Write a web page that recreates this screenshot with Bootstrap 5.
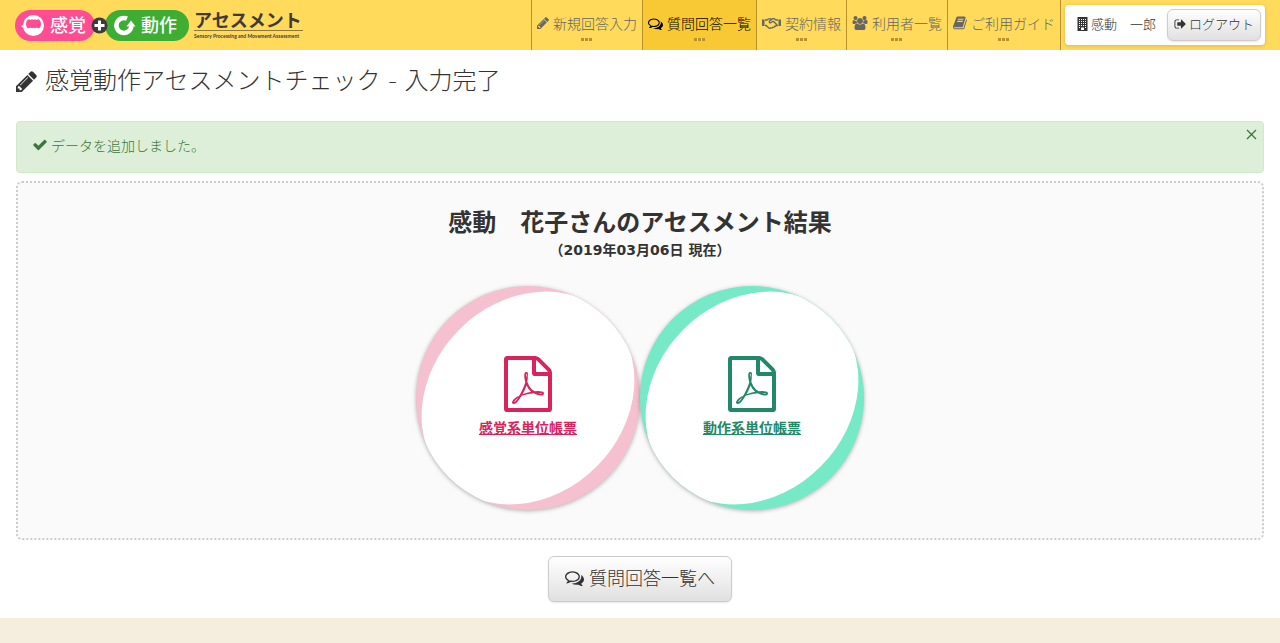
<!DOCTYPE html>
<html lang="ja">
<head>
<meta charset="utf-8">
<meta name="viewport" content="width=device-width, initial-scale=1">
<title>感覚動作アセスメントチェック - 入力完了</title>
<link rel="stylesheet" href="https://cdn.jsdelivr.net/npm/bootstrap@5.3.0/dist/css/bootstrap.min.css">
<style>
body{background:#f5eddd;color:#333;font-family:"Noto Sans CJK JP","Liberation Sans",sans-serif;font-size:14px;line-height:20px;font-weight:300}
.ico{fill:currentColor;flex:none;height:14px}
.topbar{background:#ffda5b;min-height:50px;padding:0 15px}
.topbar .nav-link{color:#666;border-left:1px solid #b8912b;height:50px;padding:13px 5px 0;display:flex;flex-direction:column;align-items:center;gap:5px}
.topbar .nav-link.active{background:#f9c935;color:#000}
.topbar .nav-link::after{content:"";width:11px;height:3px;background:repeating-linear-gradient(90deg,#b8912b 0 3px,#ffda5b 3px 4px)}
.topbar .nav-item:last-child{border-right:1px solid #b8912b}
.lbl{display:flex;align-items:center;gap:4px;white-space:nowrap}
.userbox{background:#fff;border-radius:4px;margin:5px 0 5px 4px;height:40px;padding:4px 4px 4px 12px;font-size:13px;gap:11px;box-shadow:0 1px 4px rgba(0,0,0,.15)}
.userbox .lbl{gap:3px;padding-bottom:2px}
.btn-grad{--bs-btn-color:#333;--bs-btn-border-color:#ccc;--bs-btn-font-weight:300;background:linear-gradient(#fff,#e0e0e0);box-shadow:0 1px 2px rgba(0,0,0,.1);display:inline-flex;align-items:center}
.btn-out{font-size:13px;line-height:20px;padding:4px 6px 6px;height:32px;gap:3px}
.btn-big{font-size:18px;line-height:24px;padding:8px 16px 12px;gap:5px;border-radius:6px;height:46px}
.page{background:#fff;padding:15px 16px 16px}
.page h1{font-family:"DejaVu Sans","Noto Sans CJK JP",sans-serif;font-size:24px;line-height:32px;font-weight:300;gap:8px;margin:0 0 24px}
.done{--bs-alert-bg:#ddefd8;--bs-alert-color:#3c763d;--bs-alert-border-color:#d0e9c6;padding:13px 16px 17px;margin:0 0 8px;border-radius:4px}
.shut{position:absolute;right:6px;top:7px;border:0;background:none;padding:0;color:#3c763d;display:flex}
.result{background:#fafafa;border:2px dotted #ccc;border-radius:6px;padding:24px 16px 28px;font-family:"DejaVu Sans","Noto Sans CJK JP",sans-serif;font-weight:700}
.result h2{font-size:24px;line-height:32px;font-weight:700;margin:0}
.result p{font-size:14px;line-height:20px;margin:1px 0 26px}
.disc{position:relative;width:224px;height:224px;border-radius:50%;background:var(--ring);box-shadow:0 1px 4px rgba(0,0,0,.3);color:var(--ink);overflow:hidden;padding-bottom:2px}
.disc:hover{color:var(--ink)}
.disc::before{content:"";position:absolute;width:230px;height:194px;left:50%;top:50%;transform:translate(-50%,-50%) rotate(-45deg);border-radius:50%;background:#fff}
.disc svg{width:48px;height:56px;fill:currentColor;margin-bottom:6px}
.disc svg,.disc span{position:relative}
.pink{--ring:#f5c0d0;--ink:#d8235c}
.mint{--ring:#76e9c6;--ink:#218868}
</style>
</head>
<body>
<svg class="d-none" aria-hidden="true">
<symbol id="pencil" viewBox="128 128 1536 1536"><path d="M491 1536l91-91-235-235-91 91v107h128v128h107zm523-928q0-22-22-22-10 0-17 7l-542 542q-7 7-7 17 0 22 22 22 10 0 17-7l542-542q7-7 7-17zm-54-192l416 416-832 832h-416v-416zm683 96q0 53-37 90l-166 166-416-416 166-165q36-38 90-38 53 0 91 38l235 234q37 39 37 91z"/></symbol>
<symbol id="talk" viewBox="0 0 1792 1600"><path d="M704 384q-153 0-286 52t-211.500 141-78.500 191q0 82 53 158t149 132l97 56-35 84q34-20 62-39l44-31 53 10q78 14 153 14 153 0 286-52t211.500-141 78.500-191-78.500-191-211.500-141-286-52zm0-128q191 0 353.500 68.500t256.500 186.500 94 257-94 257-256.500 186.500-353.500 68.500q-86 0-176-16-124 88-278 128-36 9-86 16h-3q-11 0-20.500-8t-11.500-21q-1-3-1-6.500t.5-6.500 2-6l2.500-5 3.500-5.500 4-5 4.500-5 4-4.500q5-6 23-25t26-29.500 22.500-29 25-38.500 20.500-44q-124-72-195-177t-71-224q0-139 94-257t256.500-186.500 353.500-68.500zm822 1169q10 24 20.500 44t25 38.500 22.500 29 26 29.500 23 25q1 1 4 4.500t4.500 5 4 5 3.500 5.500l2.500 5 2 6 .5 6.500-1 6.500q-3 14-13 22t-22 7q-50-7-86-16-154-40-278-128-90 16-176 16-271 0-472-132 58 4 88 4 161 0 309-45t264-129q125-92 192-212t67-254q0-77-23-152 129 71 204 178t75 230q0 120-71 224.500t-195 176.500z"/></symbol>
<symbol id="shake" viewBox="0 0 19 14"><path d="M0 3.500h2.500v6.500H0zM16.500 3.500H19v6.500h-2.500z"/><path d="M3 4h2l1.500-1.200h2.300l.8.600M16 4h-2l-1.800-1.300h-1.700L7.400 5.200c-.6.900.3 2.100 1.500 1.500l1.700-1.200h1l3.300 3.300M3 9.500h1.200l2.600 2.400c.8.600 1.500.3 1.800-.1 1 .6 1.800.2 2.100-.5.900.3 1.600-.1 1.800-.8 1 .1 1.500-.4 1.500-1h2" fill="none" stroke="currentColor" stroke-width="1.300"/></symbol>
<symbol id="users" viewBox="-64 0 1920 1792"><path d="M529 896q-162 5-265 128h-134q-82 0-138-40.500t-56-118.500q0-353 124-353 6 0 43.500 21t97.500 42.500 119 21.500q67 0 133-23-5 37-5 66 0 159 93 299zm1071 637q0 120-73 189.500t-194 69.500h-874q-121 0-194-69.500t-73-189.500q0-53 3.500-103.500t14-109 26.500-108.500 43-97.500 62-81 85.500-53.500 111.500-20q10 0 43 21.500t73 48 107 48 135 21.500 135-21.500 107-48 73-48 43-21.500q61 0 111.500 20t85.500 53.500 62 81 43 97.500 26.500 108.500 14 109 3.500 103.500zm-1024-1277q0 106-75 181t-181 75-181-75-75-181 75-181 181-75 181 75 75 181zm704 384q0 159-112.500 271.500t-271.500 112.500-271.500-112.500-112.500-271.500 112.500-271.500 271.500-112.500 271.500 112.500 112.500 271.500zm576 225q0 78-56 118.500t-138 40.500h-134q-103-123-265-128 93-140 93-299 0-29-5-66 66 23 133 23 59 0 119-21.500t97.500-42.500 43.500-21q124 0 124 353zm-128-609q0 106-75 181t-181 75-181-75-75-181 75-181 181-75 181 75 75 181z"/></symbol>
<symbol id="book" viewBox="64 100 1680 1600"><path d="M1703 478q40 57 18 129l-275 906q-19 64-76.500 107.500t-122.500 43.500h-923q-77 0-148.500-53.500t-99.500-131.500q-24-67-2-127 0-4 3-27t4-37q1-8-3-21.500t-3-19.500q2-11 8-21t16.500-23.500 16.500-23.500q23-38 45-91.500t30-91.500q3-10 .5-30t-.5-28q3-11 17-28t17-23q21-36 42-92t25-90q1-9-2.500-32t.5-28q4-13 22-30.500t22-22.500q19-26 42.500-84.500t27.500-96.500q1-8-3-25.500t-2-26.500q2-8 9-18t18-23 17-21q8-12 16.500-30.500t15-35 16-36 19.500-32 26.500-23.500 36-11.500 47.500 5.500l-1 3q38-9 51-9h761q74 0 114 56t18 130l-274 906q-36 119-71.500 153.500t-128.500 34.500h-869q-27 0-38 15-11 16-1 43 24 70 144 70h923q29 0 56-15.500t35-41.500l300-987q7-22 5-57 38 15 59 43zm-1064 2q-4 13 2 22.500t20 9.500h608q13 0 25.500-9.500t16.500-22.500l21-64q4-13-2-22.500t-20-9.500h-608q-13 0-25.500 9.500t-16.500 22.500zm-83 256q-4 13 2 22.500t20 9.500h608q13 0 25.500-9.500t16.500-22.500l21-64q4-13-2-22.500t-20-9.500h-608q-13 0-25.500 9.500t-16.500 22.500z"/></symbol>
<symbol id="tower" viewBox="0 0 11 14"><path fill-rule="evenodd" d="M.5 0h10v14h-10zM2 2v1h1V2zm2 0v1h1V2zm2 0v1h1V2zm2 0v1h1V2zM2 4v1h1V4zm2 0v1h1V4zm2 0v1h1V4zm2 0v1h1V4zM2 6v1h1V6zm2 0v1h1V6zm2 0v1h1V6zm2 0v1h1V6zM2 8v1h1V8zm2 0v1h1V8zm2 0v1h1V8zm2 0v1h1V8zM2 10v1h1v-1zm6 0v1h1v-1zM4 10.500V13h3v-2.500z"/></symbol>
<symbol id="exit" viewBox="0 128 1664 1536"><path d="M704 1440q0 4 1 20t.5 26.500-3 23.500-10 19.500-20.500 6.500h-320q-119 0-203.500-84.500t-84.500-203.500v-704q0-119 84.500-203.500t203.500-84.500h320q13 0 22.500 9.500t9.500 22.500q0 4 1 20t.5 26.500-3 23.500-10 19.500-20.500 6.500h-320q-66 0-113 47t-47 113v704q0 66 47 113t113 47h312l11.500 1 11.500 3 8 5.500 7 9 2 13.500zm928-544q0 26-19 45l-544 544q-19 19-45 19t-45-19-19-45v-288h-448q-26 0-45-19t-19-45v-384q0-26 19-45t45-19h448v-288q0-26 19-45t45-19 45 19l544 544q19 19 19 45z"/></symbol>
<symbol id="tick" viewBox="100 180 1600 1500"><path d="M1671 566q0 40-28 68l-724 724-136 136q-28 28-68 28t-68-28l-136-136-362-362q-28-28-28-68t28-68l136-136q28-28 68-28t68 28l294 295 656-657q28-28 68-28t68 28l136 136q28 28 28 68z"/></symbol>
<symbol id="pdf" viewBox="128 0 1536 1792"><path d="M1596 380q28 28 48 76t20 88v1152q0 40-28 68t-68 28h-1344q-40 0-68-28t-28-68v-1600q0-40 28-68t68-28h896q40 0 88 20t76 48zm-444-244v376h376q-10-29-22-41l-313-313q-12-12-41-22zm384 1528v-1024h-416q-40 0-68-28t-28-68v-416h-768v1536h1280zm-514-593q33 26 84 56 59-7 117-7 147 0 177 49 16 22 2 52 0 1-1 2l-2 2v1q-6 38-71 38-48 0-115-20t-130-53q-221 24-392 83-153 262-242 262-15 0-28-7l-24-12q-1-1-6-5-10-10-6-36 9-40 56-91.500t132-96.500q14-9 23 6 2 2 2 4 52-85 107-197 68-136 104-262-24-82-30.500-159.500t6.500-127.500q11-40 42-40h22q23 0 35 15 18 21 9 68-2 6-4 8 1 3 1 8v30q-2 123-14 192 55 164 146 238zm-576 411q52-24 137-158-51 40-87.500 84t-49.500 74zm398-920q-15 42-2 132 1-7 7-44 0-3 7-43 1-4 4-8-1-1-1-2t-1-2-1-3q-1-22-13-36 0 1-1 2v2zm-124 661q135-54 284-81-2-1-13-9.500t-16-13.500q-76-67-127-176-27 86-83 197-30 56-45 83zm646-16q-24-24-140-24 76 28 124 28 14 0 18-1 0-1-2-3z"/></symbol>
</svg>

<header class="topbar d-flex flex-wrap">
<a href="#" class="me-auto text-decoration-none" aria-label="感覚+動作アセスメント">
<svg class="d-block" width="290" height="50" viewBox="15 0 290 50" font-family="'Noto Sans CJK JP',sans-serif">
<rect x="15" y="10" width="80" height="31" rx="15.500" fill="#ff4c93"/>
<rect x="105" y="10" width="84" height="31" rx="15.500" fill="#3dae33"/>
<circle cx="99.500" cy="25.500" r="8" fill="#3e3a39"/><path d="M99.500 20.500v10M94.500 25.500h10" stroke="#fff" stroke-width="3"/>
<circle cx="33.500" cy="25.500" r="10.500" fill="#fff"/><path d="M25 23l-4 3.500 4 2z" fill="#fff"/>
<path d="M27 20.500Q28.500 18.500 30.500 20 32 18.500 33.500 20 35 18.500 36.500 20 38.500 18.500 40 20.500 42 24 40 27.500 38.500 29 36.500 27.500 35 29 33.500 27.500 32 29 30.500 27.500 28.500 29 27 27.500 25 24 27 20.500Z" fill="#ff4c93"/>
<path d="M127 18.600A7.500 7.500 0 1 0 131.400 26" fill="none" stroke="#fff" stroke-width="4.500"/><path d="M126.500 26.500l4.500-6 4.500 6z" fill="#fff"/>
<g font-size="18" fill="#fff" font-weight="500"><text x="50" y="32">感覚</text><text x="141" y="32">動作</text></g>
<text x="194" y="27" font-size="18" font-weight="700" fill="#3e3a39">アセスメント</text>
<path d="M194 30.500h109" stroke="#8d773f"/>
<text x="194" y="38" font-size="5" font-family="Lato,sans-serif" font-weight="700" fill="#3e3a39">Sensory Processing and Movement Assessment</text>
</svg></a>
<ul class="nav">
<li class="nav-item"><a class="nav-link" href="#"><span class="lbl"><svg class="ico" width="12"><use href="#pencil"/></svg>新規回答入力</span></a></li>
<li class="nav-item"><a class="nav-link active" href="#" aria-current="page"><span class="lbl"><svg class="ico" width="15"><use href="#talk"/></svg>質問回答一覧</span></a></li>
<li class="nav-item"><a class="nav-link" href="#"><span class="lbl"><svg class="ico" width="19"><use href="#shake"/></svg>契約情報</span></a></li>
<li class="nav-item"><a class="nav-link" href="#"><span class="lbl"><svg class="ico" width="16"><use href="#users"/></svg>利用者一覧</span></a></li>
<li class="nav-item"><a class="nav-link" href="#"><span class="lbl"><svg class="ico" width="14"><use href="#book"/></svg>ご利用ガイド</span></a></li>
</ul>
<div class="userbox d-flex align-items-center">
<span class="lbl"><svg class="ico" width="11"><use href="#tower"/></svg>感動　一郎</span>
<button type="button" class="btn btn-grad btn-out"><svg class="ico" width="12"><use href="#exit"/></svg>ログアウト</button>
</div>
</header>

<main class="page">
<h1 class="d-flex align-items-center"><svg class="ico" width="21" style="height:21px"><use href="#pencil"/></svg>感覚動作アセスメントチェック - 入力完了</h1>
<div class="alert done" role="alert"><span class="lbl"><svg class="ico" width="14"><use href="#tick"/></svg>データを追加しました。</span>
<button type="button" class="shut" data-bs-dismiss="alert" aria-label="閉じる"><svg width="11" height="11" stroke="currentColor" stroke-width="1.300"><path d="M1 1l9 9M10 1l-9 9"/></svg></button></div>
<section class="result text-center">
<h2>感動　花子さんのアセスメント結果</h2>
<p>（2019年03月06日 現在）</p>
<div class="d-flex flex-wrap justify-content-center">
<a href="#" class="disc pink d-flex flex-column align-items-center justify-content-center"><svg><use href="#pdf"/></svg><span>感覚系単位帳票</span></a>
<a href="#" class="disc mint d-flex flex-column align-items-center justify-content-center"><svg><use href="#pdf"/></svg><span>動作系単位帳票</span></a>
</div>
</section>
<div class="text-center pt-3"><a href="#" class="btn btn-grad btn-big"><svg class="ico" width="19" style="height:18px"><use href="#talk"/></svg>質問回答一覧へ</a></div>
</main>
<script src="https://cdn.jsdelivr.net/npm/bootstrap@5.3.0/dist/js/bootstrap.bundle.min.js"></script>
</body>
</html>
